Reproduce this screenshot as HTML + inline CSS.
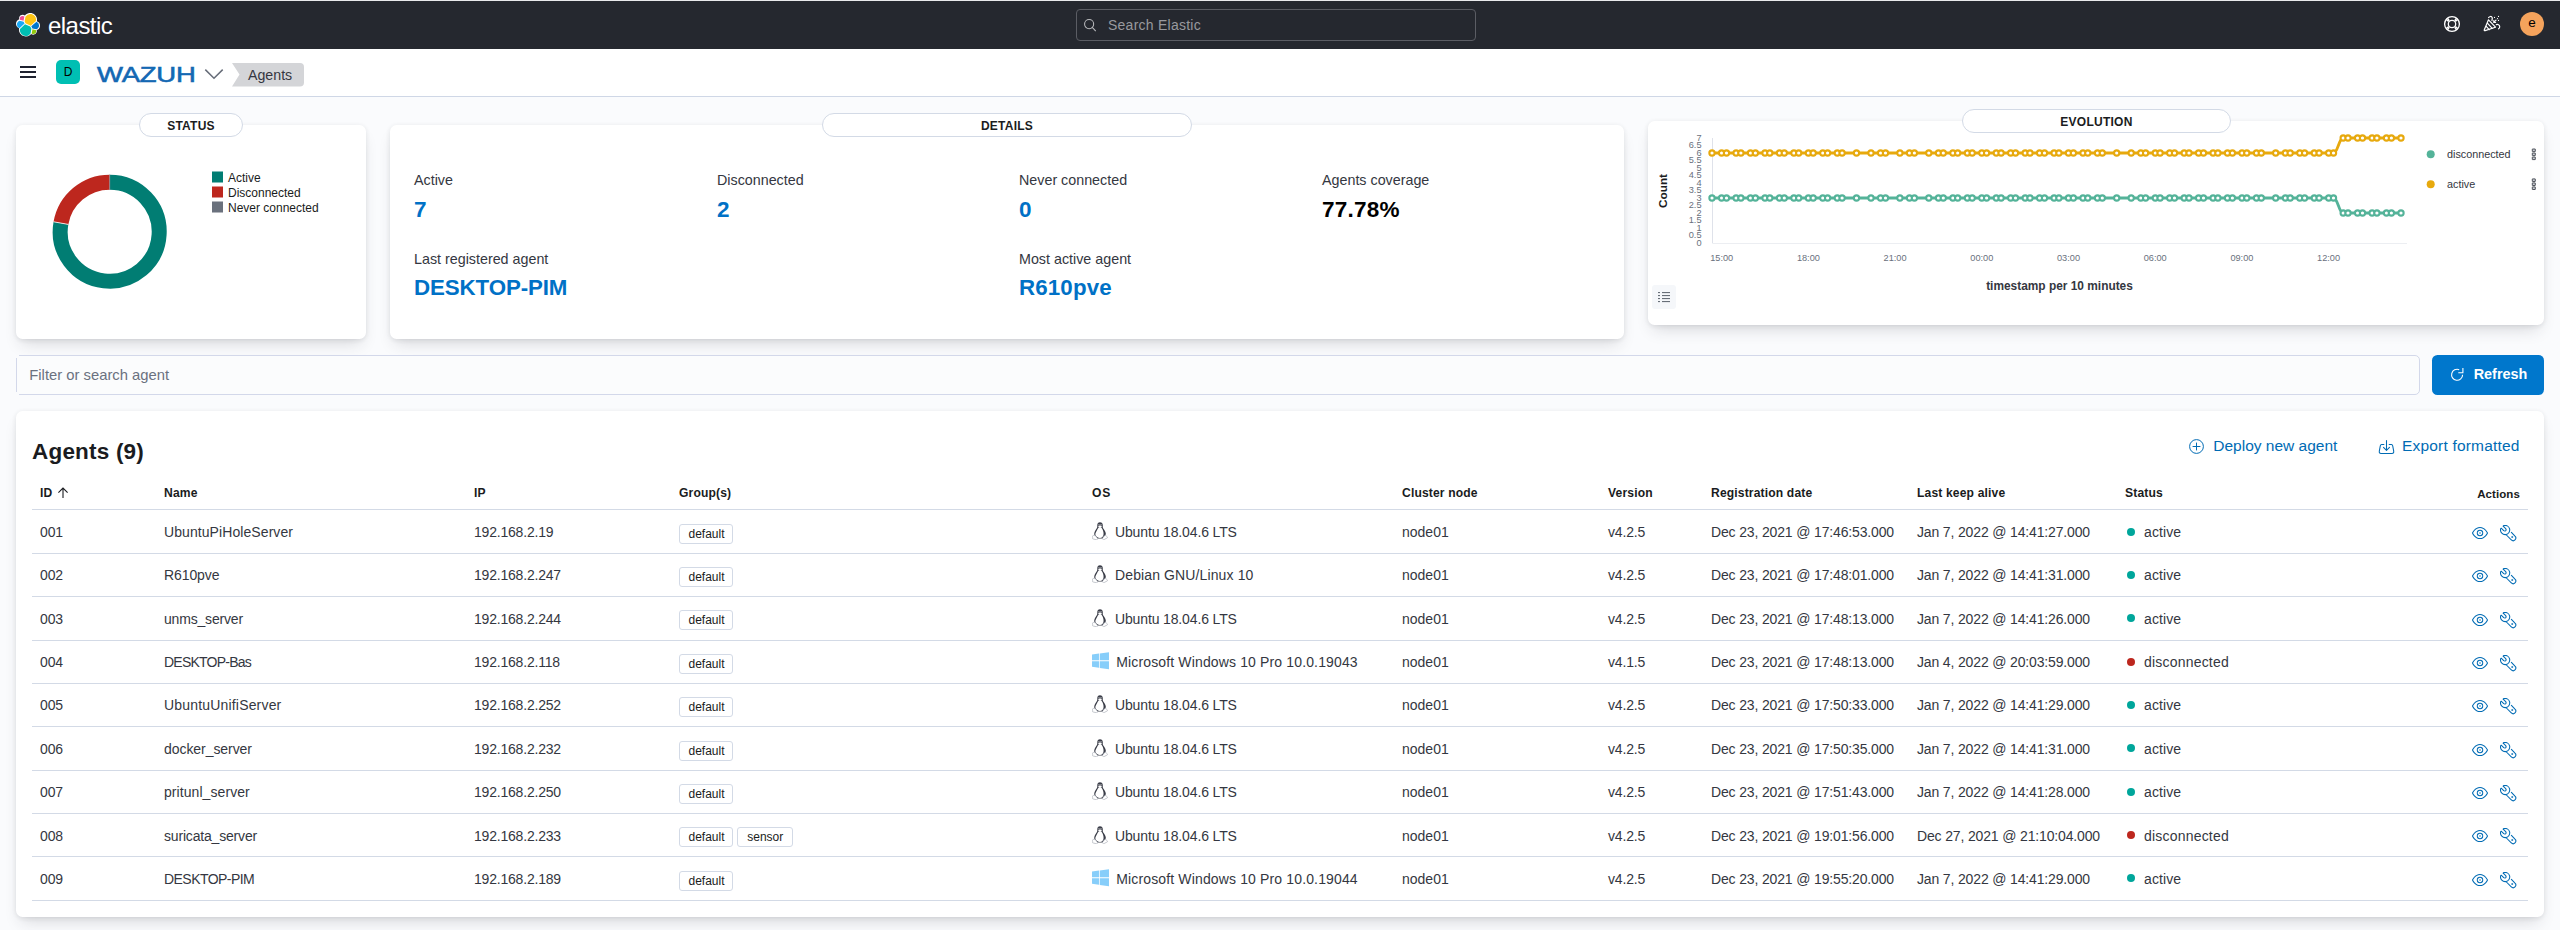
<!DOCTYPE html>
<html lang="en">
<head>
<meta charset="utf-8">
<title>Wazuh - Agents</title>
<style>
*{box-sizing:border-box}
html,body{margin:0;padding:0}
body{width:2560px;height:930px;overflow:hidden;background:#fafbfd;font-family:"Liberation Sans",sans-serif;color:#343741;position:relative;font-size:14px}
.abs{position:absolute}
#topline{left:0;top:0;width:2560px;height:1px;background:#e9eaec}
#hdr{left:0;top:1px;width:2560px;height:47.5px;background:#25282f}
#sub{left:0;top:48.5px;width:2560px;height:48px;background:#fff;border-bottom:1px solid #cfd7e6}
.card{background:#fff;border-radius:6.5px;box-shadow:0 9px 16px -5px rgba(40,44,52,.17),0 1px 5px rgba(40,44,52,.11)}
.pill{background:#fff;border:1px solid #d3dae6;border-radius:13px;height:24px;text-align:center;font-weight:700;font-size:12px;line-height:24px;color:#1a1c21;letter-spacing:.25px}
.lbl{font-size:14.3px;color:#343741;white-space:nowrap}
.val{font-size:22.5px;font-weight:700;color:#0071c6;white-space:nowrap;letter-spacing:-.1px}
.val2{font-size:22.3px;font-weight:700;color:#0071c6;white-space:nowrap;letter-spacing:-.1px}
.t{white-space:nowrap;line-height:1}

.tt{position:absolute;white-space:nowrap;font-size:14px;line-height:16px;color:#343741}
.num{letter-spacing:-.15px}
.th{position:absolute;white-space:nowrap;font-size:12.1px;line-height:14px;font-weight:700;color:#1a1c21;top:485.6px}
.hr{position:absolute;left:32px;width:2496px;height:1px;background:#d3dae6}
.bdg{position:absolute;height:20px;border:1px solid #d3dae6;border-radius:3px;background:#fff;font-size:12px;line-height:18px;text-align:center;color:#1a1c21;padding-left:1px}
.dot{position:absolute;width:8px;height:8px;border-radius:4px;left:2127px}
.lnk{position:absolute;white-space:nowrap;font-size:15.5px;line-height:18px;color:#006bb4}
</style>
</head>
<body>
<div id="topline" class="abs"></div>
<div id="hdr" class="abs"></div>
<div id="sub" class="abs"></div>


<!-- HEADER CONTENT -->
<svg class="abs" style="left:16px;top:13px" width="24" height="24" viewBox="0 0 32 32">
  <path fill="#FFF" d="M32 16.77a6.334 6.334 0 00-1.14-3.63 6.269 6.269 0 00-3.02-2.3 9.005 9.005 0 00-1.3-6.96A8.998 8.998 0 0020.6.1a8.986 8.986 0 00-6.92 1.52 8.914 8.914 0 00-1.74 1.58A4.774 4.774 0 008.98 2.18a4.798 4.798 0 00-2.78.88 4.837 4.837 0 00-1.75 2.34 4.86 4.86 0 00-.05 2.93 6.392 6.392 0 00-3.24 2.3A6.33 6.33 0 000 14.35c0 1.3.4 2.57 1.15 3.64a6.249 6.249 0 003.03 2.3 8.988 8.988 0 001.3 6.95 9.014 9.014 0 005.93 3.79 8.98 8.98 0 006.92-1.52c.65-.46 1.24-.99 1.74-1.59a4.76 4.76 0 002.95 1.02 4.798 4.798 0 004.53-3.22c.33-.94.35-1.96.06-2.92a6.388 6.388 0 003.23-2.3A6.341 6.341 0 0032 16.77"/>
  <path fill="#FEC514" d="M12.58 13.787l7.002 3.211 7.066-6.213a7.849 7.849 0 00.152-1.557c0-4.287-3.474-7.775-7.745-7.775a7.742 7.742 0 00-6.398 3.388l-1.176 6.118 1.1 2.828z"/>
  <path fill="#00BFB3" d="M5.333 21.214a8.01 8.01 0 00-.148 1.577c0 4.3 3.487 7.8 7.773 7.8 2.577 0 4.98-1.278 6.43-3.418l1.166-6.1-1.556-2.987-7.03-3.215-6.635 6.343z"/>
  <path fill="#F04E98" d="M5.288 9.067l4.8 1.137L11.14 4.73a3.785 3.785 0 00-2.295-.773 3.82 3.82 0 00-3.808 3.823c0 .453.078.886.251 1.287"/>
  <path fill="#1BA9F5" d="M4.872 10.214C2.728 10.925 1.23 12.99 1.23 15.268a5.333 5.333 0 003.44 4.995l6.734-6.109-1.237-2.65-5.295-1.29z"/>
  <path fill="#93C90E" d="M20.873 27.172a3.75 3.75 0 002.291.782 3.81 3.81 0 003.796-3.822c0-.452-.077-.886-.205-1.287l-4.795-1.128-1.087 5.455z"/>
  <path fill="#0077CC" d="M21.848 20.563l5.28 1.24c2.143-.713 3.642-2.778 3.642-5.06a5.327 5.327 0 00-3.445-4.986l-6.906 6.075 1.429 2.731z"/>
</svg>
<div class="abs t" id="elastic" style="left:48px;top:11.5px;font-size:24px;color:#fff;letter-spacing:-.55px;line-height:27px">elastic</div>

<div class="abs" style="left:1076px;top:9px;width:400px;height:32px;border:1px solid #5b5d64;border-radius:4px"></div>
<svg class="abs" style="left:1083px;top:18px" width="14" height="14" viewBox="0 0 16 16"><path fill="none" stroke="#b9babd" stroke-width="1.2" stroke-linecap="round" d="M12.2 7a5.2 5.2 0 1 1-10.4 0a5.2 5.2 0 0 1 10.4 0zM10.7 10.7l3.6 3.9"/></svg>
<div class="abs t" id="srch" style="left:1108px;top:17px;font-size:14px;letter-spacing:.25px;color:#98999e;line-height:16px">Search Elastic</div>

<!-- help -->
<svg class="abs" style="left:2443px;top:15px" width="18" height="18" viewBox="0 0 18 18" fill="none" stroke="#fff" stroke-width="1.3">
 <circle cx="9" cy="9" r="7.4"/><circle cx="9" cy="9" r="3.7"/>
 <path d="M3.0 4.2l2.6 2.2M4.2 3.0l2.2 2.6M15.0 4.2l-2.6 2.2M13.8 3.0l-2.2 2.6M3.0 13.8l2.6-2.2M4.2 15.0l2.2-2.6M15.0 13.8l-2.6-2.2M13.8 15.0l-2.2-2.6"/>
</svg>
<!-- cheer -->
<svg class="abs" style="left:2483px;top:15px" width="18" height="18" viewBox="0 0 18 18" fill="none" stroke="#fff" stroke-width="1.2" stroke-linejoin="round" stroke-linecap="round">
 <path d="M5.5 4.8L1.3 14.7c-.3.7.2 1.1.8.9l10.4-3.4z"/>
 <path d="M4.6 8.3l4.6 5.1M3.2 11.4l3 3.3"/>
 <path d="M5.6 2.6C6.4 1.2 8.6 1 9.2 2.6C9.6 3.8 8.8 4.6 9 5.6"/>
 <path d="M13.3 9.6C14.8 9 16.6 9.8 16.7 11.6C16.8 12.6 16.2 13.4 15.6 13.8"/>
 <path d="M13 5.1L10.9 7.3M10.8 5.7V7.5H12.6"/>
 <path d="M15.5 1.4v.1M14.5 3.5v.1M11.5 2.4v.1M15.5 5.3v.1" stroke-width="1.2"/>
</svg>
<div class="abs" style="left:2520px;top:12px;width:24px;height:24px;border-radius:12px;background:#f5a35c;color:#000;font-size:13.5px;text-align:center;line-height:22.6px">e</div>

<!-- SUBHEADER -->
<div class="abs" style="left:20px;top:66px;width:16px;height:1.6px;background:#1f2230"></div>
<div class="abs" style="left:20px;top:71.2px;width:16px;height:1.6px;background:#1f2230"></div>
<div class="abs" style="left:20px;top:76.4px;width:16px;height:1.6px;background:#1f2230"></div>
<div class="abs" style="left:56px;top:60px;width:24px;height:24px;border-radius:5px;background:#00bfb3;color:#000;font-size:12px;text-align:center;line-height:24px">D</div>
<div class="abs t" id="wazuh" style="left:96.6px;top:61.8px;font-size:22.9px;color:#1468b3;-webkit-text-stroke:.6px #1468b3;line-height:24px;transform-origin:0 50%;transform:scaleX(1.2);letter-spacing:-.2px">WAZUH</div>
<svg class="abs" style="left:204px;top:68px" width="20" height="12" viewBox="0 0 20 12"><path d="M1.3 1.6L10 10.2L18.7 1.6" fill="none" stroke="#676d79" stroke-width="1.5"/></svg>
<svg class="abs" style="left:232px;top:63px" width="73" height="24" viewBox="0 0 73 24"><path d="M0 0H68a4 4 0 0 1 4 4V19.5a4 4 0 0 1 -4 4H0L7.5 11.5Z" fill="#d4d5d8"/></svg>
<div class="abs t" id="crumb" style="left:248px;top:67px;font-size:14.2px;color:#343741;line-height:16px">Agents</div>

<!-- STATUS -->
<div class="abs card" style="left:16px;top:125px;width:350px;height:214px"></div>
<div class="abs pill" style="left:139px;top:113px;width:104px">STATUS</div>


<svg class="abs" style="left:16px;top:125px" width="350" height="214" viewBox="16 125 350 214">
 <path d="M109.70 182.20A49.5 49.5 0 1 1 60.95 223.10" fill="none" stroke="#017d73" stroke-width="15"/>
 <path d="M60.95 223.10A49.5 49.5 0 0 1 109.70 182.20" fill="none" stroke="#bd271e" stroke-width="15"/>
 <path d="M109.7 189.7V174.7" stroke="#8a8f98" stroke-width="0.8"/>
 <path d="M68.34 224.41L53.57 221.80" stroke="#fff" stroke-width="0.8"/>
 <rect x="212" y="171.5" width="11" height="11" fill="#017d73"/>
 <rect x="212" y="186.5" width="11" height="11" fill="#bd271e"/>
 <rect x="212" y="201.5" width="11" height="11" fill="#6a717d"/>
 <g font-family="Liberation Sans, sans-serif" font-size="12" fill="#1a1c21">
  <text x="228" y="181.5">Active</text>
  <text x="228" y="196.5">Disconnected</text>
  <text x="228" y="211.5">Never connected</text>
 </g>
</svg>

<!-- DETAILS -->
<div class="abs card" style="left:390px;top:125px;width:1234px;height:214px"></div>
<div class="abs pill" style="left:822px;top:113px;width:370px">DETAILS</div>


<div class="abs t lbl" style="left:414px;top:171px;line-height:18px">Active</div>
<div class="abs t val" style="left:414px;top:196.8px;line-height:26px">7</div>
<div class="abs t lbl" style="left:717px;top:171px;line-height:18px">Disconnected</div>
<div class="abs t val" style="left:717px;top:196.8px;line-height:26px">2</div>
<div class="abs t lbl" style="left:1019px;top:171px;line-height:18px">Never connected</div>
<div class="abs t val" style="left:1019px;top:196.8px;line-height:26px">0</div>
<div class="abs t lbl" style="left:1322px;top:171px;line-height:18px">Agents coverage</div>
<div class="abs t val" style="left:1322px;top:196.8px;line-height:26px;color:#000;letter-spacing:.25px">77.78%</div>
<div class="abs t lbl" style="left:414px;top:250px;line-height:18px">Last registered agent</div>
<div class="abs t val2" style="left:414px;top:274.35px;line-height:28px">DESKTOP-PIM</div>
<div class="abs t lbl" style="left:1019px;top:250px;line-height:18px">Most active agent</div>
<div class="abs t val2" style="left:1019px;top:274.35px;line-height:28px;letter-spacing:.15px">R610pve</div>

<!-- EVOLUTION -->
<div class="abs card" style="left:1648px;top:121px;width:896px;height:204px"></div>
<div class="abs pill" style="left:1962px;top:109px;width:269px">EVOLUTION</div>

<svg class="abs" style="left:1648px;top:121px" width="896" height="204" viewBox="1648 121 896 204" font-family="Liberation Sans, sans-serif">
<path d="M1712.5 138V243.5H2407" fill="none" stroke="#eceef2" stroke-width="1"/>
<path d="M1712.5 138V243" fill="none" stroke="#dfe2ea" stroke-width="1"/>
<g font-size="9.2" fill="#69707d" text-anchor="end"><text x="1701.5" y="245.6">0</text><text x="1701.5" y="238.1">0.5</text><text x="1701.5" y="230.6">1</text><text x="1701.5" y="223.1">1.5</text><text x="1701.5" y="215.6">2</text><text x="1701.5" y="208.1">2.5</text><text x="1701.5" y="200.6">3</text><text x="1701.5" y="193.1">3.5</text><text x="1701.5" y="185.6">4</text><text x="1701.5" y="178.1">4.5</text><text x="1701.5" y="170.6">5</text><text x="1701.5" y="163.1">5.5</text><text x="1701.5" y="155.6">6</text><text x="1701.5" y="148.1">6.5</text><text x="1701.5" y="140.6">7</text></g>
<g font-size="9.2" fill="#69707d" text-anchor="middle"><text x="1721.7" y="260.8">15:00</text><text x="1808.4" y="260.8">18:00</text><text x="1895.1" y="260.8">21:00</text><text x="1981.8" y="260.8">00:00</text><text x="2068.5" y="260.8">03:00</text><text x="2155.2" y="260.8">06:00</text><text x="2241.9" y="260.8">09:00</text><text x="2328.6" y="260.8">12:00</text></g>
<text transform="translate(1667.3 191) rotate(-90)" text-anchor="middle" font-size="11.8" font-weight="700" fill="#1a1c21">Count</text>
<text x="2059.5" y="290" text-anchor="middle" font-size="11.9" font-weight="700" fill="#343741">timestamp per 10 minutes</text>
<path d="M1712.0 153.0L1721.6 153.0L1726.5 153.0L1736.1 153.0L1740.9 153.0L1750.5 153.0L1755.4 153.0L1765.0 153.0L1769.8 153.0L1779.5 153.0L1784.3 153.0L1793.9 153.0L1798.7 153.0L1808.4 153.0L1813.2 153.0L1822.8 153.0L1827.6 153.0L1837.3 153.0L1842.1 153.0L1856.5 153.0L1871.0 153.0L1880.6 153.0L1885.5 153.0L1899.9 153.0L1909.5 153.0L1914.4 153.0L1928.8 153.0L1938.5 153.0L1943.3 153.0L1952.9 153.0L1957.7 153.0L1967.4 153.0L1972.2 153.0L1981.8 153.0L1986.6 153.0L1996.3 153.0L2001.1 153.0L2010.7 153.0L2015.5 153.0L2025.2 153.0L2030.0 153.0L2039.6 153.0L2044.5 153.0L2054.1 153.0L2058.9 153.0L2068.5 153.0L2073.4 153.0L2083.0 153.0L2087.8 153.0L2097.5 153.0L2102.3 153.0L2116.7 153.0L2131.2 153.0L2140.8 153.0L2145.6 153.0L2155.3 153.0L2160.1 153.0L2169.7 153.0L2174.5 153.0L2184.2 153.0L2189.0 153.0L2198.6 153.0L2203.5 153.0L2213.1 153.0L2217.9 153.0L2227.5 153.0L2232.4 153.0L2242.0 153.0L2246.8 153.0L2256.5 153.0L2261.3 153.0L2275.7 153.0L2285.4 153.0L2290.2 153.0L2299.8 153.0L2304.6 153.0L2314.3 153.0L2319.1 153.0L2328.7 153.0L2333.5 153.0C2337.9 153.0 2338.8 138.0 2343.2 138.0L2348.0 138.0L2357.6 138.0L2362.5 138.0L2372.1 138.0L2376.9 138.0L2386.5 138.0L2391.4 138.0L2401.0 138.0" fill="none" stroke="#e7a90d" stroke-width="2.8" stroke-linejoin="round"/>
<g fill="#fff" stroke="#e7a90d" stroke-width="2.1"><circle cx="1712.0" cy="153.0" r="2.65"/><circle cx="1721.6" cy="153.0" r="2.65"/><circle cx="1726.5" cy="153.0" r="2.65"/><circle cx="1736.1" cy="153.0" r="2.65"/><circle cx="1740.9" cy="153.0" r="2.65"/><circle cx="1750.5" cy="153.0" r="2.65"/><circle cx="1755.4" cy="153.0" r="2.65"/><circle cx="1765.0" cy="153.0" r="2.65"/><circle cx="1769.8" cy="153.0" r="2.65"/><circle cx="1779.5" cy="153.0" r="2.65"/><circle cx="1784.3" cy="153.0" r="2.65"/><circle cx="1793.9" cy="153.0" r="2.65"/><circle cx="1798.7" cy="153.0" r="2.65"/><circle cx="1808.4" cy="153.0" r="2.65"/><circle cx="1813.2" cy="153.0" r="2.65"/><circle cx="1822.8" cy="153.0" r="2.65"/><circle cx="1827.6" cy="153.0" r="2.65"/><circle cx="1837.3" cy="153.0" r="2.65"/><circle cx="1842.1" cy="153.0" r="2.65"/><circle cx="1856.5" cy="153.0" r="2.65"/><circle cx="1871.0" cy="153.0" r="2.65"/><circle cx="1880.6" cy="153.0" r="2.65"/><circle cx="1885.5" cy="153.0" r="2.65"/><circle cx="1899.9" cy="153.0" r="2.65"/><circle cx="1909.5" cy="153.0" r="2.65"/><circle cx="1914.4" cy="153.0" r="2.65"/><circle cx="1928.8" cy="153.0" r="2.65"/><circle cx="1938.5" cy="153.0" r="2.65"/><circle cx="1943.3" cy="153.0" r="2.65"/><circle cx="1952.9" cy="153.0" r="2.65"/><circle cx="1957.7" cy="153.0" r="2.65"/><circle cx="1967.4" cy="153.0" r="2.65"/><circle cx="1972.2" cy="153.0" r="2.65"/><circle cx="1981.8" cy="153.0" r="2.65"/><circle cx="1986.6" cy="153.0" r="2.65"/><circle cx="1996.3" cy="153.0" r="2.65"/><circle cx="2001.1" cy="153.0" r="2.65"/><circle cx="2010.7" cy="153.0" r="2.65"/><circle cx="2015.5" cy="153.0" r="2.65"/><circle cx="2025.2" cy="153.0" r="2.65"/><circle cx="2030.0" cy="153.0" r="2.65"/><circle cx="2039.6" cy="153.0" r="2.65"/><circle cx="2044.5" cy="153.0" r="2.65"/><circle cx="2054.1" cy="153.0" r="2.65"/><circle cx="2058.9" cy="153.0" r="2.65"/><circle cx="2068.5" cy="153.0" r="2.65"/><circle cx="2073.4" cy="153.0" r="2.65"/><circle cx="2083.0" cy="153.0" r="2.65"/><circle cx="2087.8" cy="153.0" r="2.65"/><circle cx="2097.5" cy="153.0" r="2.65"/><circle cx="2102.3" cy="153.0" r="2.65"/><circle cx="2116.7" cy="153.0" r="2.65"/><circle cx="2131.2" cy="153.0" r="2.65"/><circle cx="2140.8" cy="153.0" r="2.65"/><circle cx="2145.6" cy="153.0" r="2.65"/><circle cx="2155.3" cy="153.0" r="2.65"/><circle cx="2160.1" cy="153.0" r="2.65"/><circle cx="2169.7" cy="153.0" r="2.65"/><circle cx="2174.5" cy="153.0" r="2.65"/><circle cx="2184.2" cy="153.0" r="2.65"/><circle cx="2189.0" cy="153.0" r="2.65"/><circle cx="2198.6" cy="153.0" r="2.65"/><circle cx="2203.5" cy="153.0" r="2.65"/><circle cx="2213.1" cy="153.0" r="2.65"/><circle cx="2217.9" cy="153.0" r="2.65"/><circle cx="2227.5" cy="153.0" r="2.65"/><circle cx="2232.4" cy="153.0" r="2.65"/><circle cx="2242.0" cy="153.0" r="2.65"/><circle cx="2246.8" cy="153.0" r="2.65"/><circle cx="2256.5" cy="153.0" r="2.65"/><circle cx="2261.3" cy="153.0" r="2.65"/><circle cx="2275.7" cy="153.0" r="2.65"/><circle cx="2285.4" cy="153.0" r="2.65"/><circle cx="2290.2" cy="153.0" r="2.65"/><circle cx="2299.8" cy="153.0" r="2.65"/><circle cx="2304.6" cy="153.0" r="2.65"/><circle cx="2314.3" cy="153.0" r="2.65"/><circle cx="2319.1" cy="153.0" r="2.65"/><circle cx="2328.7" cy="153.0" r="2.65"/><circle cx="2333.5" cy="153.0" r="2.65"/><circle cx="2343.2" cy="138.0" r="2.65"/><circle cx="2348.0" cy="138.0" r="2.65"/><circle cx="2357.6" cy="138.0" r="2.65"/><circle cx="2362.5" cy="138.0" r="2.65"/><circle cx="2372.1" cy="138.0" r="2.65"/><circle cx="2376.9" cy="138.0" r="2.65"/><circle cx="2386.5" cy="138.0" r="2.65"/><circle cx="2391.4" cy="138.0" r="2.65"/><circle cx="2401.0" cy="138.0" r="2.65"/></g>
<path d="M1712.0 198.0L1721.6 198.0L1726.5 198.0L1736.1 198.0L1740.9 198.0L1750.5 198.0L1755.4 198.0L1765.0 198.0L1769.8 198.0L1779.5 198.0L1784.3 198.0L1793.9 198.0L1798.7 198.0L1808.4 198.0L1813.2 198.0L1822.8 198.0L1827.6 198.0L1837.3 198.0L1842.1 198.0L1856.5 198.0L1871.0 198.0L1880.6 198.0L1885.5 198.0L1899.9 198.0L1909.5 198.0L1914.4 198.0L1928.8 198.0L1938.5 198.0L1943.3 198.0L1952.9 198.0L1957.7 198.0L1967.4 198.0L1972.2 198.0L1981.8 198.0L1986.6 198.0L1996.3 198.0L2001.1 198.0L2010.7 198.0L2015.5 198.0L2025.2 198.0L2030.0 198.0L2039.6 198.0L2044.5 198.0L2054.1 198.0L2058.9 198.0L2068.5 198.0L2073.4 198.0L2083.0 198.0L2087.8 198.0L2097.5 198.0L2102.3 198.0L2116.7 198.0L2131.2 198.0L2140.8 198.0L2145.6 198.0L2155.3 198.0L2160.1 198.0L2169.7 198.0L2174.5 198.0L2184.2 198.0L2189.0 198.0L2198.6 198.0L2203.5 198.0L2213.1 198.0L2217.9 198.0L2227.5 198.0L2232.4 198.0L2242.0 198.0L2246.8 198.0L2256.5 198.0L2261.3 198.0L2275.7 198.0L2285.4 198.0L2290.2 198.0L2299.8 198.0L2304.6 198.0L2314.3 198.0L2319.1 198.0L2328.7 198.0L2333.5 198.0C2337.9 198.0 2338.8 213.0 2343.2 213.0L2348.0 213.0L2357.6 213.0L2362.5 213.0L2372.1 213.0L2376.9 213.0L2386.5 213.0L2391.4 213.0L2401.0 213.0" fill="none" stroke="#54b399" stroke-width="2.8" stroke-linejoin="round"/>
<g fill="#fff" stroke="#54b399" stroke-width="2.1"><circle cx="1712.0" cy="198.0" r="2.65"/><circle cx="1721.6" cy="198.0" r="2.65"/><circle cx="1726.5" cy="198.0" r="2.65"/><circle cx="1736.1" cy="198.0" r="2.65"/><circle cx="1740.9" cy="198.0" r="2.65"/><circle cx="1750.5" cy="198.0" r="2.65"/><circle cx="1755.4" cy="198.0" r="2.65"/><circle cx="1765.0" cy="198.0" r="2.65"/><circle cx="1769.8" cy="198.0" r="2.65"/><circle cx="1779.5" cy="198.0" r="2.65"/><circle cx="1784.3" cy="198.0" r="2.65"/><circle cx="1793.9" cy="198.0" r="2.65"/><circle cx="1798.7" cy="198.0" r="2.65"/><circle cx="1808.4" cy="198.0" r="2.65"/><circle cx="1813.2" cy="198.0" r="2.65"/><circle cx="1822.8" cy="198.0" r="2.65"/><circle cx="1827.6" cy="198.0" r="2.65"/><circle cx="1837.3" cy="198.0" r="2.65"/><circle cx="1842.1" cy="198.0" r="2.65"/><circle cx="1856.5" cy="198.0" r="2.65"/><circle cx="1871.0" cy="198.0" r="2.65"/><circle cx="1880.6" cy="198.0" r="2.65"/><circle cx="1885.5" cy="198.0" r="2.65"/><circle cx="1899.9" cy="198.0" r="2.65"/><circle cx="1909.5" cy="198.0" r="2.65"/><circle cx="1914.4" cy="198.0" r="2.65"/><circle cx="1928.8" cy="198.0" r="2.65"/><circle cx="1938.5" cy="198.0" r="2.65"/><circle cx="1943.3" cy="198.0" r="2.65"/><circle cx="1952.9" cy="198.0" r="2.65"/><circle cx="1957.7" cy="198.0" r="2.65"/><circle cx="1967.4" cy="198.0" r="2.65"/><circle cx="1972.2" cy="198.0" r="2.65"/><circle cx="1981.8" cy="198.0" r="2.65"/><circle cx="1986.6" cy="198.0" r="2.65"/><circle cx="1996.3" cy="198.0" r="2.65"/><circle cx="2001.1" cy="198.0" r="2.65"/><circle cx="2010.7" cy="198.0" r="2.65"/><circle cx="2015.5" cy="198.0" r="2.65"/><circle cx="2025.2" cy="198.0" r="2.65"/><circle cx="2030.0" cy="198.0" r="2.65"/><circle cx="2039.6" cy="198.0" r="2.65"/><circle cx="2044.5" cy="198.0" r="2.65"/><circle cx="2054.1" cy="198.0" r="2.65"/><circle cx="2058.9" cy="198.0" r="2.65"/><circle cx="2068.5" cy="198.0" r="2.65"/><circle cx="2073.4" cy="198.0" r="2.65"/><circle cx="2083.0" cy="198.0" r="2.65"/><circle cx="2087.8" cy="198.0" r="2.65"/><circle cx="2097.5" cy="198.0" r="2.65"/><circle cx="2102.3" cy="198.0" r="2.65"/><circle cx="2116.7" cy="198.0" r="2.65"/><circle cx="2131.2" cy="198.0" r="2.65"/><circle cx="2140.8" cy="198.0" r="2.65"/><circle cx="2145.6" cy="198.0" r="2.65"/><circle cx="2155.3" cy="198.0" r="2.65"/><circle cx="2160.1" cy="198.0" r="2.65"/><circle cx="2169.7" cy="198.0" r="2.65"/><circle cx="2174.5" cy="198.0" r="2.65"/><circle cx="2184.2" cy="198.0" r="2.65"/><circle cx="2189.0" cy="198.0" r="2.65"/><circle cx="2198.6" cy="198.0" r="2.65"/><circle cx="2203.5" cy="198.0" r="2.65"/><circle cx="2213.1" cy="198.0" r="2.65"/><circle cx="2217.9" cy="198.0" r="2.65"/><circle cx="2227.5" cy="198.0" r="2.65"/><circle cx="2232.4" cy="198.0" r="2.65"/><circle cx="2242.0" cy="198.0" r="2.65"/><circle cx="2246.8" cy="198.0" r="2.65"/><circle cx="2256.5" cy="198.0" r="2.65"/><circle cx="2261.3" cy="198.0" r="2.65"/><circle cx="2275.7" cy="198.0" r="2.65"/><circle cx="2285.4" cy="198.0" r="2.65"/><circle cx="2290.2" cy="198.0" r="2.65"/><circle cx="2299.8" cy="198.0" r="2.65"/><circle cx="2304.6" cy="198.0" r="2.65"/><circle cx="2314.3" cy="198.0" r="2.65"/><circle cx="2319.1" cy="198.0" r="2.65"/><circle cx="2328.7" cy="198.0" r="2.65"/><circle cx="2333.5" cy="198.0" r="2.65"/><circle cx="2343.2" cy="213.0" r="2.65"/><circle cx="2348.0" cy="213.0" r="2.65"/><circle cx="2357.6" cy="213.0" r="2.65"/><circle cx="2362.5" cy="213.0" r="2.65"/><circle cx="2372.1" cy="213.0" r="2.65"/><circle cx="2376.9" cy="213.0" r="2.65"/><circle cx="2386.5" cy="213.0" r="2.65"/><circle cx="2391.4" cy="213.0" r="2.65"/><circle cx="2401.0" cy="213.0" r="2.65"/></g>
<circle cx="2430.7" cy="154.3" r="4" fill="#54b399"/><circle cx="2430.7" cy="184.2" r="4" fill="#e7a90d"/>
<g font-size="10.8" fill="#343741"><text x="2447" y="158">disconnected</text><text x="2447" y="188">active</text></g>
<rect x="2532.3" y="149.0" width="3" height="2.6" rx=".2" fill="#c9ccd2" stroke="#40444d" stroke-width=".9"/><rect x="2532.3" y="153.0" width="3" height="2.6" rx=".2" fill="#c9ccd2" stroke="#40444d" stroke-width=".9"/><rect x="2532.3" y="157.0" width="3" height="2.6" rx=".2" fill="#c9ccd2" stroke="#40444d" stroke-width=".9"/><rect x="2532.3" y="178.9" width="3" height="2.6" rx=".2" fill="#c9ccd2" stroke="#40444d" stroke-width=".9"/><rect x="2532.3" y="182.9" width="3" height="2.6" rx=".2" fill="#c9ccd2" stroke="#40444d" stroke-width=".9"/><rect x="2532.3" y="186.9" width="3" height="2.6" rx=".2" fill="#c9ccd2" stroke="#40444d" stroke-width=".9"/>
<rect x="1652" y="285" width="24" height="24" rx="3" fill="#f5f7fa"/>
<path d="M1662 292.6h8M1662 295.6h8M1662 298.6h8M1662 301.6h8" stroke="#5a606b" stroke-width="1"/><path d="M1658 292.6h2M1658 295.6h2M1658 298.6h2M1658 301.6h2" stroke="#5a606b" stroke-width="1"/>
</svg>

<!-- SEARCH -->
<div class="abs" style="left:16px;top:355px;width:2404px;height:40px;background:#fbfcfd;border:1px solid #d3d8ea;border-radius:0 5px 5px 0"></div>
<div class="abs" style="left:16px;top:355px;width:3px;height:3px;background:#fafbfd"></div><div class="abs" style="left:16px;top:392px;width:3px;height:3px;background:#fafbfd"></div>
<div class="abs t" id="ph" style="left:29.3px;top:366.4px;font-size:14.8px;line-height:18px;color:#6a7180">Filter or search agent</div>
<div class="abs" style="left:2432px;top:354.7px;width:112.2px;height:40.3px;background:#0077cc;border-radius:5.5px"></div>
<svg class="abs" style="left:2449px;top:366px" width="18" height="18" viewBox="2449 366 18 18" fill="none" stroke="#fff" stroke-width="1.1"><path d="M2462.6 374.8A5.5 5.5 0 1 1 2459.2 369.7"/><path d="M2462.9 367.9V372.7H2458.3"/></svg>
<div class="abs t" id="refresh" style="left:2473.7px;top:364.6px;font-size:14.4px;font-weight:700;line-height:18px;color:#fff">Refresh</div>

<!-- TABLE PANEL -->
<div class="abs card" style="left:16px;top:411px;width:2528px;height:506px"></div>

<!-- TABLE -->

<svg width="0" height="0" style="position:absolute">
 <defs>
  <g id="i-eye"><path fill="#006bb4" d="M15.98 7.873c.013.03.02.064.02.098v.06a.24.24 0 01-.02.097C15.952 8.188 13.291 14 8 14S.047 8.188.02 8.128A.24.24 0 010 8.03v-.059c0-.034.007-.068.02-.098C.048 7.813 2.709 2 8 2s7.953 5.813 7.98 5.873zm-1.37-.424a12.097 12.097 0 00-1.385-1.862C11.739 3.956 9.999 3 8 3c-2 0-3.74.956-5.225 2.587a12.098 12.098 0 00-1.701 2.414 12.095 12.095 0 001.7 2.413C4.26 12.043 6.002 13 8 13s3.74-.956 5.225-2.587A12.097 12.097 0 0014.926 8c-.08-.15-.189-.343-.315-.551zM8 4.75A3.253 3.253 0 0111.25 8 3.254 3.254 0 018 11.25 3.253 3.253 0 014.75 8 3.252 3.252 0 018 4.75zm0 1C6.76 5.75 5.75 6.76 5.75 8S6.76 10.25 8 10.25 10.25 9.24 10.25 8 9.24 5.75 8 5.75zm0 1.5a.75.75 0 100 1.5.75.75 0 000-1.5z"/></g>
  <g id="i-wrench" fill="none" stroke="#006bb4" stroke-width="1.05" stroke-linejoin="round" stroke-linecap="round"><path d="M3.1 1.2L5.7 3.6Q6.5 4.7 5.7 5.6Q4.8 6.5 3.7 5.7L1.2 3.2Q.5 3.5 .5 4.6A4.62 4.62 0 1 0 3.4 .7Z"/><path d="M6.4 10L11.3 14.9A2.6 2.6 0 0 0 15 11.2L11.4 7.4"/><circle cx="12.1" cy="12" r=".55" fill="#006bb4" stroke-width=".6"/></g>
  <g id="i-linux">
   <path d="M8 .3C6.3 .3 5.3 1.6 5.3 3.3C5.3 4.8 5.4 5.6 4.6 6.9C3.6 8.5 2.2 10.5 2.2 12.6C2.2 13.2 2.4 13.6 2.7 13.9L5.3 17.3L10.6 17.3L12.4 14.5C13.4 14.2 13.9 13.2 13.8 11.9C13.6 9.7 12.2 8.3 11.3 6.8C10.6 5.6 10.8 4.6 10.8 3.3C10.8 1.5 9.7 .3 8 .3Z" fill="#3b3e49"/>
   <path d="M8 5.3C6.6 5.3 5.8 7 5 8.6C4.1 10.4 3.1 12 3.4 13.3C3.8 14.9 6 16.6 8 16.6C9.8 16.6 10.9 15.4 11.4 13.8C11.9 12.2 11.4 9.8 10.8 8.4C10.2 7 9.4 5.3 8 5.3Z" fill="#fff"/>
   <ellipse cx="8" cy="4.6" rx="1.8" ry="1" fill="#fff"/>
   <circle cx="7" cy="2.9" r=".6" fill="#fff"/><circle cx="9" cy="2.9" r=".6" fill="#fff"/>
   <path d="M.5 15.3C.4 14.4 1 13.9 1.8 14.1L3.4 14.3L5.5 17.3C5.8 18.2 5 18.7 4.2 18.5L1 17.7C.3 17.5 .3 16.9 .6 16.4Z" fill="#fff" stroke="#9da2ad" stroke-width=".6"/>
   <path d="M10.5 17.2C10.5 18.3 11.4 18.7 12.2 18.3L15.3 16.6C15.8 16.2 15.6 15.6 15.1 15.3L13.7 14.1L12.2 14.5Z" fill="#fff" stroke="#9da2ad" stroke-width=".6"/>
  </g>
  <g id="i-win"><path fill="#87cefa" d="M0 93.7l183.6-25.3v177.4H0V93.7zm0 324.6l183.6 25.3V268.4H0v149.9zm203.8 28L448 480V268.4H203.8v177.9zm0-380.6v180.1H448V32L203.8 65.7z"/></g>
 </defs>
</svg>
<div class="abs t" id="title" style="left:32px;top:438.9px;font-size:22.5px;font-weight:700;line-height:26px;color:#1a1c21;letter-spacing:.2px">Agents (9)</div>
<svg class="abs" style="left:2189px;top:439px" width="15" height="15" viewBox="0 0 15 15" fill="none" stroke="#006bb4" stroke-width="1"><circle cx="7.5" cy="7.5" r="6.9"/><path d="M7.5 3.6V11.4M3.6 7.5H11.4"/></svg>
<div class="lnk" id="deploy" style="left:2213.3px;top:437.1px;letter-spacing:0">Deploy new agent</div>
<svg class="abs" style="left:2376px;top:438px" width="20" height="18" viewBox="2376 438 20 18" fill="none" stroke="#006bb4" stroke-width="1.05" stroke-linecap="round" stroke-linejoin="round"><path d="M2383.9 444.5H2381.6Q2380.6 444.6 2380.3 445.8L2379.3 451.2Q2379 453.5 2381 453.5H2392Q2394 453.5 2393.7 451.2L2392.7 445.8Q2392.4 444.6 2391.4 444.5H2389.2"/><path d="M2386.5 440.4V450.2M2383.5 447.4L2386.5 450.4L2389.5 447.4"/></svg>
<div class="lnk" id="export" style="left:2402px;top:437.1px;letter-spacing:.19px">Export formatted</div>
<div class="th" style="left:40px;letter-spacing:.15px">ID</div><div class="th" style="left:164px;letter-spacing:.15px">Name</div><div class="th" style="left:474px;letter-spacing:.15px">IP</div><div class="th" style="left:679px;letter-spacing:.15px">Group(s)</div><div class="th" style="left:1092px;letter-spacing:.9px">OS</div><div class="th" style="left:1402px;letter-spacing:.15px">Cluster node</div><div class="th" style="left:1608px;letter-spacing:.15px">Version</div><div class="th" style="left:1711px;letter-spacing:.15px">Registration date</div><div class="th" style="left:1917px;letter-spacing:.15px">Last keep alive</div><div class="th" style="left:2125px;letter-spacing:.15px">Status</div><div class="th" style="right:40px;font-size:11.5px;letter-spacing:.1px;top:487.2px;font-weight:700">Actions</div>
<svg class="abs" style="left:57px;top:487px" width="12" height="12" viewBox="0 0 12 12" fill="none" stroke="#1a1c21" stroke-width="1.1"><path d="M6 1.2V11M1.4 5.6L6 1.1L10.6 5.6"/></svg>
<!-- ROWS -->
<div class="hr" style="top:509px"></div>
<div class="tt" style="left:40px;top:524.00px;letter-spacing:-0.15px">001</div><div class="tt" style="left:164px;top:524.00px;letter-spacing:0.08px">UbuntuPiHoleServer</div><div class="tt" style="left:474px;top:524.00px;letter-spacing:-0.2px">192.168.2.19</div><div class="bdg" style="left:679px;top:524px;width:54px">default</div><svg class="abs" style="left:1091.7px;top:521.90px" width="16" height="18.2" viewBox="0 0 16 19" preserveAspectRatio="none"><use href="#i-linux"/></svg><div class="tt" style="left:1115px;top:524.00px;letter-spacing:-0.14px">Ubuntu 18.04.6 LTS</div><div class="tt" style="left:1402px;top:524.00px">node01</div><div class="tt" style="left:1608px;top:524.00px;letter-spacing:-0.15px">v4.2.5</div><div class="tt" style="left:1711px;top:524.00px;letter-spacing:-0.15px">Dec 23, 2021 @ 17:46:53.000</div><div class="tt" style="left:1917px;top:524.00px;letter-spacing:-0.15px">Jan 7, 2022 @ 14:41:27.000</div><div class="dot" style="top:528.00px;background:#00a69b"></div><div class="tt" style="left:2144px;top:524.00px;letter-spacing:0.1px">active</div><svg class="abs" style="left:2472px;top:524.80px" width="16" height="16" viewBox="0 0 16 16"><use href="#i-eye"/></svg><svg class="abs" style="left:2500px;top:524.80px" width="17" height="17" viewBox="0 0 17 17"><use href="#i-wrench"/></svg><div class="hr" style="top:553px"></div>
<div class="tt" style="left:40px;top:567.00px;letter-spacing:-0.15px">002</div><div class="tt" style="left:164px;top:567.00px;letter-spacing:-0.1px">R610pve</div><div class="tt" style="left:474px;top:567.00px;letter-spacing:-0.2px">192.168.2.247</div><div class="bdg" style="left:679px;top:567px;width:54px">default</div><svg class="abs" style="left:1091.7px;top:564.90px" width="16" height="18.2" viewBox="0 0 16 19" preserveAspectRatio="none"><use href="#i-linux"/></svg><div class="tt" style="left:1115px;top:567.00px;letter-spacing:0.12px">Debian GNU/Linux 10</div><div class="tt" style="left:1402px;top:567.00px">node01</div><div class="tt" style="left:1608px;top:567.00px;letter-spacing:-0.15px">v4.2.5</div><div class="tt" style="left:1711px;top:567.00px;letter-spacing:-0.15px">Dec 23, 2021 @ 17:48:01.000</div><div class="tt" style="left:1917px;top:567.00px;letter-spacing:-0.15px">Jan 7, 2022 @ 14:41:31.000</div><div class="dot" style="top:571.00px;background:#00a69b"></div><div class="tt" style="left:2144px;top:567.00px;letter-spacing:0.1px">active</div><svg class="abs" style="left:2472px;top:567.80px" width="16" height="16" viewBox="0 0 16 16"><use href="#i-eye"/></svg><svg class="abs" style="left:2500px;top:567.80px" width="17" height="17" viewBox="0 0 17 17"><use href="#i-wrench"/></svg><div class="hr" style="top:596px"></div>
<div class="tt" style="left:40px;top:611.00px;letter-spacing:-0.15px">003</div><div class="tt" style="left:164px;top:611.00px;letter-spacing:-0.18px">unms_server</div><div class="tt" style="left:474px;top:611.00px;letter-spacing:-0.2px">192.168.2.244</div><div class="bdg" style="left:679px;top:610px;width:54px">default</div><svg class="abs" style="left:1091.7px;top:608.90px" width="16" height="18.2" viewBox="0 0 16 19" preserveAspectRatio="none"><use href="#i-linux"/></svg><div class="tt" style="left:1115px;top:611.00px;letter-spacing:-0.14px">Ubuntu 18.04.6 LTS</div><div class="tt" style="left:1402px;top:611.00px">node01</div><div class="tt" style="left:1608px;top:611.00px;letter-spacing:-0.15px">v4.2.5</div><div class="tt" style="left:1711px;top:611.00px;letter-spacing:-0.15px">Dec 23, 2021 @ 17:48:13.000</div><div class="tt" style="left:1917px;top:611.00px;letter-spacing:-0.15px">Jan 7, 2022 @ 14:41:26.000</div><div class="dot" style="top:614.00px;background:#00a69b"></div><div class="tt" style="left:2144px;top:611.00px;letter-spacing:0.1px">active</div><svg class="abs" style="left:2472px;top:611.80px" width="16" height="16" viewBox="0 0 16 16"><use href="#i-eye"/></svg><svg class="abs" style="left:2500px;top:611.80px" width="17" height="17" viewBox="0 0 17 17"><use href="#i-wrench"/></svg><div class="hr" style="top:640px"></div>
<div class="tt" style="left:40px;top:654.00px;letter-spacing:-0.15px">004</div><div class="tt" style="left:164px;top:654.00px;letter-spacing:-0.77px">DESKTOP-Bas</div><div class="tt" style="left:474px;top:654.00px;letter-spacing:-0.2px">192.168.2.118</div><div class="bdg" style="left:679px;top:654px;width:54px">default</div><svg class="abs" style="left:1092px;top:650.90px" width="17" height="19.4" viewBox="0 0 448 512"><use href="#i-win"/></svg><div class="tt" style="left:1116.3px;top:654.00px;letter-spacing:0.14px">Microsoft Windows 10 Pro 10.0.19043</div><div class="tt" style="left:1402px;top:654.00px">node01</div><div class="tt" style="left:1608px;top:654.00px;letter-spacing:-0.15px">v4.1.5</div><div class="tt" style="left:1711px;top:654.00px;letter-spacing:-0.15px">Dec 23, 2021 @ 17:48:13.000</div><div class="tt" style="left:1917px;top:654.00px;letter-spacing:-0.15px">Jan 4, 2022 @ 20:03:59.000</div><div class="dot" style="top:658.00px;background:#bd271e"></div><div class="tt" style="left:2144px;top:654.00px;letter-spacing:0.2px">disconnected</div><svg class="abs" style="left:2472px;top:654.80px" width="16" height="16" viewBox="0 0 16 16"><use href="#i-eye"/></svg><svg class="abs" style="left:2500px;top:654.80px" width="17" height="17" viewBox="0 0 17 17"><use href="#i-wrench"/></svg><div class="hr" style="top:683px"></div>
<div class="tt" style="left:40px;top:697.00px;letter-spacing:-0.15px">005</div><div class="tt" style="left:164px;top:697.00px;letter-spacing:0.18px">UbuntuUnifiServer</div><div class="tt" style="left:474px;top:697.00px;letter-spacing:-0.2px">192.168.2.252</div><div class="bdg" style="left:679px;top:697px;width:54px">default</div><svg class="abs" style="left:1091.7px;top:694.90px" width="16" height="18.2" viewBox="0 0 16 19" preserveAspectRatio="none"><use href="#i-linux"/></svg><div class="tt" style="left:1115px;top:697.00px;letter-spacing:-0.14px">Ubuntu 18.04.6 LTS</div><div class="tt" style="left:1402px;top:697.00px">node01</div><div class="tt" style="left:1608px;top:697.00px;letter-spacing:-0.15px">v4.2.5</div><div class="tt" style="left:1711px;top:697.00px;letter-spacing:-0.15px">Dec 23, 2021 @ 17:50:33.000</div><div class="tt" style="left:1917px;top:697.00px;letter-spacing:-0.15px">Jan 7, 2022 @ 14:41:29.000</div><div class="dot" style="top:701.00px;background:#00a69b"></div><div class="tt" style="left:2144px;top:697.00px;letter-spacing:0.1px">active</div><svg class="abs" style="left:2472px;top:697.80px" width="16" height="16" viewBox="0 0 16 16"><use href="#i-eye"/></svg><svg class="abs" style="left:2500px;top:697.80px" width="17" height="17" viewBox="0 0 17 17"><use href="#i-wrench"/></svg><div class="hr" style="top:726px"></div>
<div class="tt" style="left:40px;top:741.00px;letter-spacing:-0.15px">006</div><div class="tt" style="left:164px;top:741.00px;letter-spacing:-0.06px">docker_server</div><div class="tt" style="left:474px;top:741.00px;letter-spacing:-0.2px">192.168.2.232</div><div class="bdg" style="left:679px;top:741px;width:54px">default</div><svg class="abs" style="left:1091.7px;top:738.90px" width="16" height="18.2" viewBox="0 0 16 19" preserveAspectRatio="none"><use href="#i-linux"/></svg><div class="tt" style="left:1115px;top:741.00px;letter-spacing:-0.14px">Ubuntu 18.04.6 LTS</div><div class="tt" style="left:1402px;top:741.00px">node01</div><div class="tt" style="left:1608px;top:741.00px;letter-spacing:-0.15px">v4.2.5</div><div class="tt" style="left:1711px;top:741.00px;letter-spacing:-0.15px">Dec 23, 2021 @ 17:50:35.000</div><div class="tt" style="left:1917px;top:741.00px;letter-spacing:-0.15px">Jan 7, 2022 @ 14:41:31.000</div><div class="dot" style="top:744.00px;background:#00a69b"></div><div class="tt" style="left:2144px;top:741.00px;letter-spacing:0.1px">active</div><svg class="abs" style="left:2472px;top:741.80px" width="16" height="16" viewBox="0 0 16 16"><use href="#i-eye"/></svg><svg class="abs" style="left:2500px;top:741.80px" width="17" height="17" viewBox="0 0 17 17"><use href="#i-wrench"/></svg><div class="hr" style="top:770px"></div>
<div class="tt" style="left:40px;top:784.00px;letter-spacing:-0.15px">007</div><div class="tt" style="left:164px;top:784.00px;letter-spacing:0.07px">pritunl_server</div><div class="tt" style="left:474px;top:784.00px;letter-spacing:-0.2px">192.168.2.250</div><div class="bdg" style="left:679px;top:784px;width:54px">default</div><svg class="abs" style="left:1091.7px;top:781.90px" width="16" height="18.2" viewBox="0 0 16 19" preserveAspectRatio="none"><use href="#i-linux"/></svg><div class="tt" style="left:1115px;top:784.00px;letter-spacing:-0.14px">Ubuntu 18.04.6 LTS</div><div class="tt" style="left:1402px;top:784.00px">node01</div><div class="tt" style="left:1608px;top:784.00px;letter-spacing:-0.15px">v4.2.5</div><div class="tt" style="left:1711px;top:784.00px;letter-spacing:-0.15px">Dec 23, 2021 @ 17:51:43.000</div><div class="tt" style="left:1917px;top:784.00px;letter-spacing:-0.15px">Jan 7, 2022 @ 14:41:28.000</div><div class="dot" style="top:788.00px;background:#00a69b"></div><div class="tt" style="left:2144px;top:784.00px;letter-spacing:0.1px">active</div><svg class="abs" style="left:2472px;top:784.80px" width="16" height="16" viewBox="0 0 16 16"><use href="#i-eye"/></svg><svg class="abs" style="left:2500px;top:784.80px" width="17" height="17" viewBox="0 0 17 17"><use href="#i-wrench"/></svg><div class="hr" style="top:813px"></div>
<div class="tt" style="left:40px;top:828.00px;letter-spacing:-0.15px">008</div><div class="tt" style="left:164px;top:828.00px;letter-spacing:-0.18px">suricata_server</div><div class="tt" style="left:474px;top:828.00px;letter-spacing:-0.2px">192.168.2.233</div><div class="bdg" style="left:679px;top:827px;width:54px">default</div><div class="bdg" style="left:737px;top:827px;width:55.5px">sensor</div><svg class="abs" style="left:1091.7px;top:825.90px" width="16" height="18.2" viewBox="0 0 16 19" preserveAspectRatio="none"><use href="#i-linux"/></svg><div class="tt" style="left:1115px;top:828.00px;letter-spacing:-0.14px">Ubuntu 18.04.6 LTS</div><div class="tt" style="left:1402px;top:828.00px">node01</div><div class="tt" style="left:1608px;top:828.00px;letter-spacing:-0.15px">v4.2.5</div><div class="tt" style="left:1711px;top:828.00px;letter-spacing:-0.15px">Dec 23, 2021 @ 19:01:56.000</div><div class="tt" style="left:1917px;top:828.00px;letter-spacing:-0.15px">Dec 27, 2021 @ 21:10:04.000</div><div class="dot" style="top:831.00px;background:#bd271e"></div><div class="tt" style="left:2144px;top:828.00px;letter-spacing:0.2px">disconnected</div><svg class="abs" style="left:2472px;top:828.00px" width="16" height="16" viewBox="0 0 16 16"><use href="#i-eye"/></svg><svg class="abs" style="left:2500px;top:828.00px" width="17" height="17" viewBox="0 0 17 17"><use href="#i-wrench"/></svg><div class="hr" style="top:856px"></div>
<div class="tt" style="left:40px;top:871.00px;letter-spacing:-0.15px">009</div><div class="tt" style="left:164px;top:871.00px;letter-spacing:-0.55px">DESKTOP-PIM</div><div class="tt" style="left:474px;top:871.00px;letter-spacing:-0.2px">192.168.2.189</div><div class="bdg" style="left:679px;top:871px;width:54px">default</div><svg class="abs" style="left:1092px;top:867.90px" width="17" height="19.4" viewBox="0 0 448 512"><use href="#i-win"/></svg><div class="tt" style="left:1116.3px;top:871.00px;letter-spacing:0.14px">Microsoft Windows 10 Pro 10.0.19044</div><div class="tt" style="left:1402px;top:871.00px">node01</div><div class="tt" style="left:1608px;top:871.00px;letter-spacing:-0.15px">v4.2.5</div><div class="tt" style="left:1711px;top:871.00px;letter-spacing:-0.15px">Dec 23, 2021 @ 19:55:20.000</div><div class="tt" style="left:1917px;top:871.00px;letter-spacing:-0.15px">Jan 7, 2022 @ 14:41:29.000</div><div class="dot" style="top:874.00px;background:#00a69b"></div><div class="tt" style="left:2144px;top:871.00px;letter-spacing:0.1px">active</div><svg class="abs" style="left:2472px;top:871.80px" width="16" height="16" viewBox="0 0 16 16"><use href="#i-eye"/></svg><svg class="abs" style="left:2500px;top:871.80px" width="17" height="17" viewBox="0 0 17 17"><use href="#i-wrench"/></svg><div class="hr" style="top:900px"></div>
<!-- /ROWS -->
</body>
</html>
